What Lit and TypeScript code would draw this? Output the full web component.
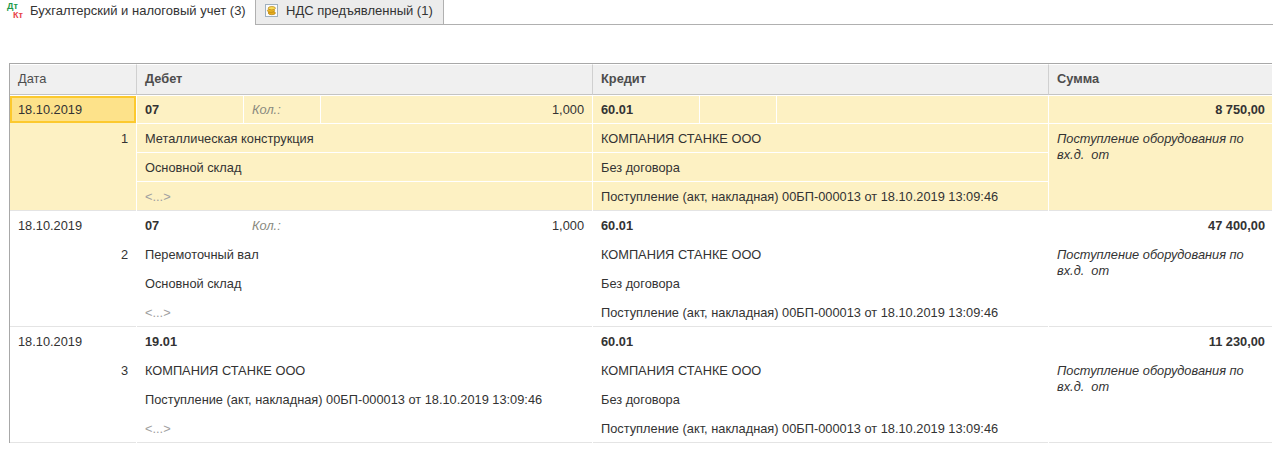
import { LitElement, html, css, nothing } from "lit";
import { customElement } from "lit/decorators.js";

interface Entry {
  n: number; debit: string; qty: boolean; d: string[]; c: string[]; sum: string; selected?: boolean;
}
const DOC = "Поступление (акт, накладная) 00БП-000013 от 18.10.2019 13:09:46";
const CO = "КОМПАНИЯ СТАНКЕ ООО";
const entries: Entry[] = [
  { n: 1, debit: "07", qty: true, d: ["Металлическая конструкция", "Основной склад", "<...>"], c: [CO, "Без договора", DOC], sum: "8 750,00", selected: true },
  { n: 2, debit: "07", qty: true, d: ["Перемоточный вал", "Основной склад", "<...>"], c: [CO, "Без договора", DOC], sum: "47 400,00" },
  { n: 3, debit: "19.01", qty: false, d: [CO, DOC, "<...>"], c: [CO, "Без договора", DOC], sum: "11 230,00" },
];

@customElement("app-root")
export class AppRoot extends LitElement {
  static styles = css`
    :host { display: block; width: 1273px; height: 454px; overflow: hidden; background: #fff; font: 12.8px "Liberation Sans", Arial, sans-serif; color: #333; }
    .tabs { display: flex; height: 25px; align-items: stretch; font-size: 13px; }
    .tab { display: flex; align-items: center; white-space: nowrap; color: #333; }
    .tab.active { width: 255px; padding: 0 0 4px 6px; box-sizing: border-box; }
    .tab.other { width: 189px; box-sizing: border-box; background: #ececec; border: 1px solid #b0b0b0; border-top: 0; padding: 0 0 4px 9px; }
    .rest { flex: 1; border-bottom: 1px solid #b0b0b0; }
    .dk { position: relative; width: 18px; height: 17px; margin-right: 6px; flex: none; font-size: 9px; font-weight: bold; line-height: 8px; margin-top: 2px; }
    .dk .g { position: absolute; left: 1px; top: -1px; color: #1e9a4a; }
    .dk .r { position: absolute; left: 7px; top: 8px; color: #e8444a; }
    .tab svg { margin-right: 8px; flex: none; }
    .table { margin: 38px 1px 0 9px; border-left: 1px solid #a8a8a8; }
    .head { display: grid; grid-template-columns: 127px 456px 456px 1fr; height: 33px; box-sizing: border-box; border-top: 1px solid #a8a8a8; border-bottom: 1px solid #fff; font-weight: bold; color: #4d4d4d; }
    .head > div { padding: 0 8px 3px; display: flex; align-items: center; box-sizing: border-box; background: #f0f0f0; border-top: 1px solid #fff; border-bottom: 1px solid #c4c4c4; border-right: 1px solid #d0d0d0; }
    .head > div:first-child { font-weight: normal; }
    .head > div:last-child { border-right: 0; }
    .row { display: grid; grid-template-columns: 127px 456px 456px 1fr; height: 116px; box-sizing: border-box; border-bottom: 1px solid #e4e4e4; }
    .row.sel { background: #fdf1c3; height: 115px; }
    .col { display: grid; grid-template-rows: repeat(4, 29px); border-right: 1px solid #fff; box-sizing: border-box; min-width: 0; }
    .sel .col { grid-template-rows: 28px repeat(3, 29px); }
    .col.last { border-right: 0; grid-template-rows: 29px 1fr; }
    .sel .col.last { grid-template-rows: 28px 1fr; }
    .cell { display: flex; align-items: center; padding: 0 8px; border-bottom: 1px solid #fff; white-space: nowrap; box-sizing: border-box; min-width: 0; }
    .cell:nth-child(4) { border-bottom: 0; }
    .sub { display: grid; grid-template-columns: 107px 77px 1fr; border-bottom: 1px solid #fff; box-sizing: border-box; }
    .sub .cell { border-bottom: 0; border-right: 1px solid #fff; }
    .sub .cell:last-child { border-right: 0; justify-content: flex-end; }
    .bold { font-weight: bold; }
    .kol { font-style: italic; color: #8a8a80; }
    .muted { color: #a0a0a0; }
    .date { border-bottom: 1px solid transparent; }
    .date.focus { background: #fde28a; border: 2px solid #fcc92e; padding: 0 6px; height: 27px; }
    .num { justify-content: flex-end; border-bottom: 0; align-items: center; height: 29px; }
    .sum { justify-content: flex-end; font-weight: bold; padding-right: 7px; }
    .comment { display: block; white-space: pre-wrap; font-style: italic; padding: 7px 8px 0; line-height: 16px; border-bottom: 0; color: #333; }
  `;

  private renderEntry(e: Entry) {
    return html`<div class="row ${e.selected ? "sel" : ""}">
      <div class="col">
        <div class="cell date ${e.selected ? "focus" : ""}">18.10.2019</div>
        <div class="cell num">${e.n}</div>
      </div>
      <div class="col">
        <div class="sub">
          <div class="cell bold">${e.debit}</div>
          <div class="cell kol">${e.qty ? "Кол.:" : nothing}</div>
          <div class="cell">${e.qty ? "1,000" : nothing}</div>
        </div>
        ${e.d.map((t) => html`<div class="cell ${t === "<...>" ? "muted" : ""}">${t}</div>`)}
      </div>
      <div class="col">
        <div class="sub">
          <div class="cell bold">60.01</div>
          <div class="cell"></div>
          <div class="cell"></div>
        </div>
        ${e.c.map((t) => html`<div class="cell">${t}</div>`)}
      </div>
      <div class="col last">
        <div class="cell sum">${e.sum}</div>
        <div class="cell comment">Поступление оборудования по вх.д.  от</div>
      </div>
    </div>`;
  }

  render() {
    return html`
      <div class="tabs">
        <div class="tab active">
          <span class="dk"><span class="g">Дт</span><span class="r">Кт</span></span>
          Бухгалтерский и налоговый учет (3)
        </div>
        <div class="tab other">
          <svg width="13" height="13" viewBox="0 0 13 13">
            <rect x="0.5" y="0.5" width="12" height="12" fill="#fafbfc" stroke="#9fb0bf"/>
            <ellipse cx="6.8" cy="9" rx="3.6" ry="1.7" fill="#e8ad1c" stroke="#b57f10" stroke-width="0.7"/>
            <ellipse cx="6" cy="6.6" rx="3.6" ry="1.7" fill="#edb825" stroke="#b57f10" stroke-width="0.7"/>
            <ellipse cx="6.8" cy="4.2" rx="3.6" ry="1.7" fill="#f8da55" stroke="#b57f10" stroke-width="0.7"/>
          </svg>
          НДС предъявленный (1)
        </div>
        <div class="rest"></div>
      </div>
      <div class="table">
        <div class="head"><div>Дата</div><div>Дебет</div><div>Кредит</div><div>Сумма</div></div>
        ${entries.map((e) => this.renderEntry(e))}
      </div>
    `;
  }
}
